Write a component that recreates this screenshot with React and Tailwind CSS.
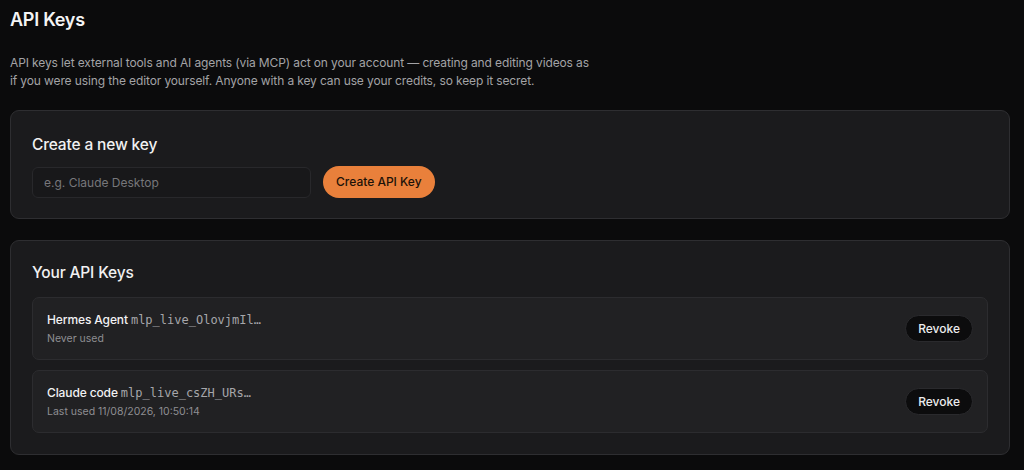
export default function App() {
  const keys = [
    { name: "Hermes Agent", prefix: "mlp_live_OlovjmIl…", status: "Never used" },
    { name: "Claude code", prefix: "mlp_live_csZH_URs…", status: "Last used 11/08/2026, 10:50:14" },
  ];

  return (
    <div
      className="min-h-[470px] w-full bg-[#0b0b0c] text-white pl-[10px] pr-[14px] pt-[8px] pb-4"
      style={{ fontFamily: "Inter, 'Noto Sans', sans-serif" }}
    >
      <h1 className="text-[18px] leading-[24px] font-semibold tracking-[-0.015em] text-[#f4f4f5]">API Keys</h1>

      <p className="mt-[22px] text-[12px] leading-[18px] tracking-[-0.01em] text-[#a3a3a6] whitespace-nowrap">
        API keys let external tools and AI agents (via MCP) act on your account — creating and editing videos as
        <br />
        if you were using the editor yourself. Anyone with a key can use your credits, so keep it secret.
      </p>

      <section className="mt-[20px] rounded-[9px] border border-[#2e2e31] bg-[#1b1b1d] px-[21px] pt-[24px] pb-[20px]">
        <h2 className="text-[15.5px] leading-[20px] font-medium tracking-[-0.01em] text-[#f1f1f2]">Create a new key</h2>
        <div className="mt-[11px] flex items-center gap-[12px]">
          <input
            placeholder="e.g. Claude Desktop"
            className="h-[31px] w-[279px] rounded-[6px] border border-[#28282b] bg-[#18181a] px-[11px] text-[12px] text-white placeholder:text-[#77777b] outline-none"
          />
          <button className="h-[32px] rounded-full bg-[#e9803b] px-[13px] text-[12px] font-medium text-[#1d1208]">
            Create API Key
          </button>
        </div>
      </section>

      <section className="mt-[21px] rounded-[9px] border border-[#2e2e31] bg-[#1b1b1d] px-[21px] pt-[22px] pb-[21px]">
        <h2 className="text-[15.5px] leading-[20px] font-medium tracking-[-0.01em] text-[#f1f1f2]">Your API Keys</h2>
        <div className="mt-[14px] flex flex-col gap-[10px]">
          {keys.map((k) => (
            <div
              key={k.name}
              className="flex h-[63px] items-center justify-between rounded-[7px] border border-[#2c2c2f] bg-[#212123] pl-[14px] pr-[14px]"
            >
              <div className="flex flex-col">
                <div className="flex items-baseline gap-[3px] text-[12px] leading-[17px]">
                  <span className="font-medium tracking-[-0.01em] text-[#f2f2f3]">{k.name}</span>
                  <span
                    className="text-[12px] text-[#a6a6aa]"
                    style={{ fontFamily: "'DejaVu Sans Mono', 'Liberation Mono', monospace" }}
                  >
                    {k.prefix}
                  </span>
                </div>
                <span className="mt-[3px] text-[10.5px] leading-[14px] text-[#8e8e92]">{k.status}</span>
              </div>
              <button className="h-[27px] rounded-full border border-[#2a2a2d] bg-[#0c0c0d] px-[12px] text-[12px] font-medium text-[#ececee]">
                Revoke
              </button>
            </div>
          ))}
        </div>
      </section>
    </div>
  );
}
